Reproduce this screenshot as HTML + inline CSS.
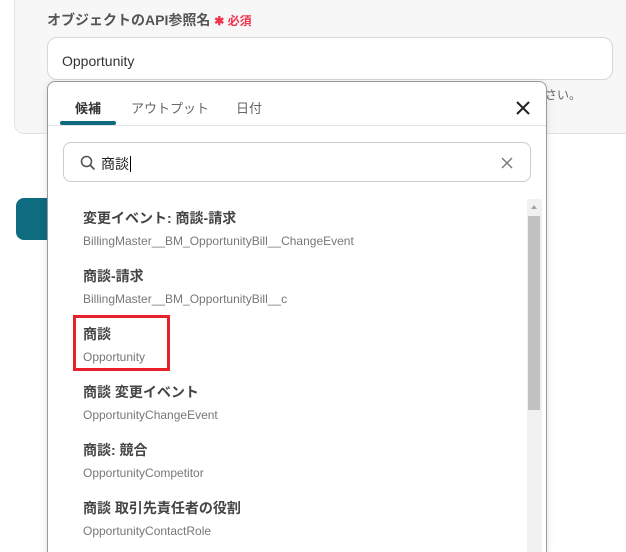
<!DOCTYPE html>
<html><head><meta charset="utf-8"><style>
html,body{margin:0;width:626px;height:552px;overflow:hidden}
body{background:#fff;font-family:"Liberation Sans","Noto Sans CJK JP",sans-serif;position:relative}
.card{position:absolute;left:14px;top:-10px;width:640px;height:142px;background:#f7f7f8;border:1px solid #e3e3e6;border-radius:10px}
.lbl{position:absolute;left:47px;top:10px;font-size:14px;font-weight:bold;color:#555}
.lbl span{color:#f0334d;font-size:12px}
.inp{position:absolute;left:47px;top:37px;width:566px;height:43px;border:1px solid #d6d6db;border-radius:10px;background:#fff;box-sizing:border-box;font-size:14px;color:#333;padding:15px 0 0 14px}
.hint{position:absolute;left:545px;top:86px;font-size:12px;color:#666}
.btn{position:absolute;left:16px;top:198px;width:40px;height:42px;background:#0e6b80;border-radius:8px}
.pop{position:absolute;left:47px;top:81px;width:500px;height:472px;background:#fff;border:1px solid #999;border-bottom:none;border-radius:8px 8px 0 0;box-sizing:border-box;box-shadow:0 2px 8px rgba(0,0,0,.12);overflow:hidden}
.tab{position:absolute;top:16px;font-size:13px;color:#666}
.ul{position:absolute;left:12px;top:39px;width:56px;height:4px;background:#0e6b80;border-radius:2px}
.div{position:absolute;left:0;right:0;top:43px;height:1px;background:#e3e3e6}
.srch{position:absolute;left:15px;top:60px;width:468px;height:40px;border:1px solid #ccc;border-radius:8px;box-sizing:border-box}
.sb{position:absolute;left:479px;top:117px;width:15px;height:360px;background:#f1f1f1}
.th{position:absolute;left:1px;top:17px;width:12px;height:194px;background:#c1c1c1}
.it{position:absolute;left:35px}
.t{font-size:14px;font-weight:bold;color:#444;height:26px}
.s{font-size:12px;color:#777}
.red{position:absolute;left:73px;top:315px;width:97px;height:56px;border:3px solid #e8202a;box-sizing:border-box}
</style></head><body>
<div class="card"></div>
<div class="lbl">オブジェクトのAPI参照名 <span>✱ 必須</span></div>
<div class="inp">Opportunity</div>
<div class="hint">さい。</div>
<div class="btn"></div>
<div class="pop">
 <div class="tab" style="left:27px;color:#333;font-weight:bold">候補</div>
 <div class="tab" style="left:83px">アウトプット</div>
 <div class="tab" style="left:188px">日付</div>
 <svg style="position:absolute;left:467px;top:18px" width="16" height="16"><path d="M2 2L14 14M14 2L2 14" stroke="#222" stroke-width="2"/></svg>
 <div class="ul"></div><div class="div"></div>
 <div class="srch">
  <svg style="position:absolute;left:16px;top:12px" width="16" height="16"><circle cx="6.5" cy="6.5" r="5" fill="none" stroke="#555" stroke-width="1.6"/><path d="M10 10L14.5 14.5" stroke="#555" stroke-width="1.8"/></svg>
  <div style="position:absolute;left:37px;top:11px;font-size:14px;color:#222">商談<span style="border-left:1px solid #000;margin-left:1px"></span></div>
  <svg style="position:absolute;left:437px;top:14px" width="12" height="12"><path d="M1 1L11 11M11 1L1 11" stroke="#777" stroke-width="1.4"/></svg>
 </div>
 <div class="sb"><div style="position:absolute;left:4px;top:6px;border:3.5px solid transparent;border-bottom:4px solid #a3a3a3;border-top:0"></div><div class="th"></div></div>
 <div class="it" style="top:126px"><div class="t">変更イベント: 商談-請求</div><div class="s">BillingMaster__BM_OpportunityBill__ChangeEvent</div></div>
 <div class="it" style="top:184px"><div class="t">商談-請求</div><div class="s">BillingMaster__BM_OpportunityBill__c</div></div>
 <div class="it" style="top:242px"><div class="t">商談</div><div class="s">Opportunity</div></div>
 <div class="it" style="top:300px"><div class="t">商談 変更イベント</div><div class="s">OpportunityChangeEvent</div></div>
 <div class="it" style="top:358px"><div class="t">商談: 競合</div><div class="s">OpportunityCompetitor</div></div>
 <div class="it" style="top:416px"><div class="t">商談 取引先責任者の役割</div><div class="s">OpportunityContactRole</div></div>
</div>
<div class="red"></div>
</body></html>
